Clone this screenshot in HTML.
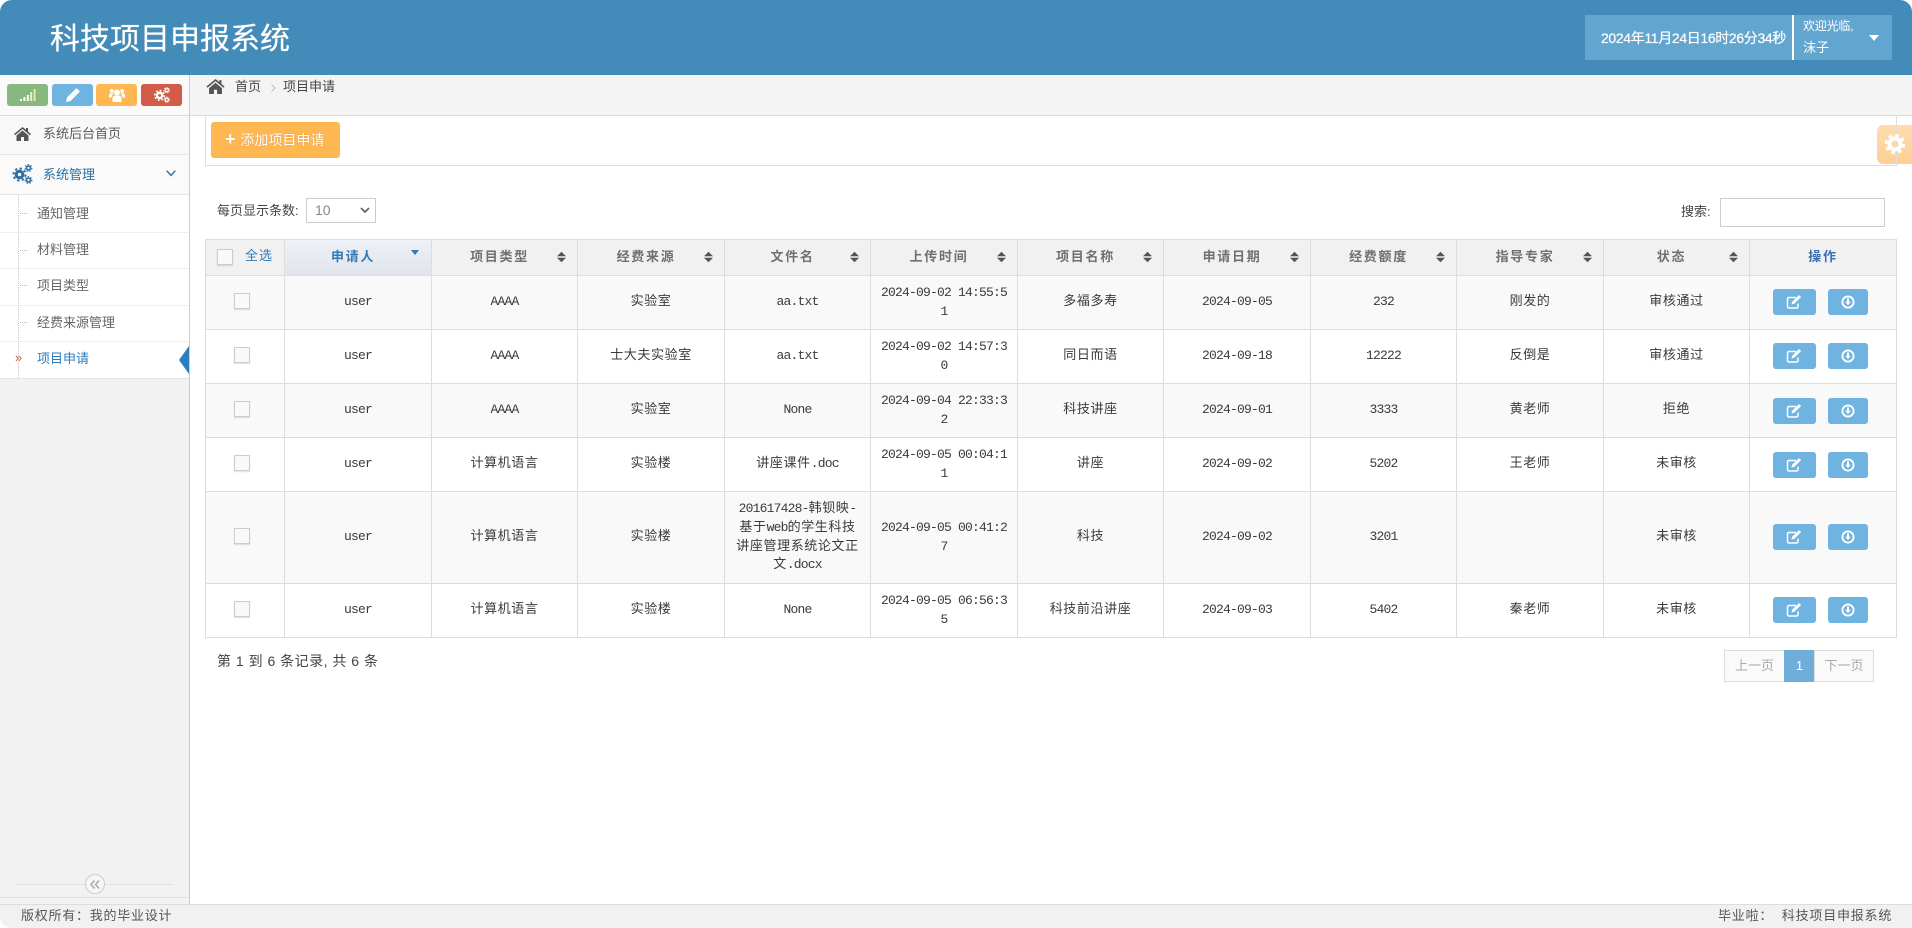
<!DOCTYPE html>
<html lang="zh-CN"><head><meta charset="utf-8"><title>科技项目申报系统</title>
<style>
*{box-sizing:border-box}
html,body{margin:0;padding:0;width:1912px;height:928px;overflow:hidden;background:#fff}
body{position:relative;font-family:"Liberation Sans","Noto Sans CJK SC",sans-serif;font-size:13px;color:#444}
.a{position:absolute;white-space:nowrap}
svg{display:block}
#hd{left:0;top:0;width:1912px;height:75px;background:#438bb8;border-radius:12px 12px 0 0}
#ft{left:0;top:904px;width:1912px;height:24px;background:#f1f1f1;border-top:1px solid #ddd;border-radius:0 0 0 12px}
#side{left:0;top:75px;width:190px;height:829px;background:#f2f2f2;border-right:1px solid #ccc}
.sb{height:22px;width:41px;top:84px;border-radius:3px}
.menu{left:0;width:189px;border-bottom:1px solid #e5e5e5}
.sub{left:0;width:189px;background:#fff;border-bottom:1px dotted #e2e2e2}
.subt{left:37px;color:#666;line-height:20px}
table{position:absolute;left:205px;top:239px;border-collapse:separate;border-spacing:0;table-layout:fixed;width:1692px;border-left:1px solid #ddd;border-top:1px solid #ddd;font-family:"Liberation Mono","Noto Sans CJK SC",monospace}
td,th{border-right:1px solid #ddd;border-bottom:1px solid #ddd;padding:0 8px;text-align:center;vertical-align:middle;font-size:13px;line-height:18.6px;font-weight:400;color:#3a3a3a;position:relative;letter-spacing:.6px}
.m{letter-spacing:-.8px}
th{height:36px;background:#f1f1f1;color:#707070;font-weight:700;letter-spacing:1.7px;padding:0 18px 1px 8px;font-family:"Liberation Sans","Noto Sans CJK SC",sans-serif}
th.act{background:linear-gradient(#eef1f7,#e0e4ec);color:#337ab7}
tr.o td{background:#f9f9f9}
tr.r td{height:54px}
.sort{position:absolute;right:11px;top:11px}
.cb{width:16px;height:16px;background:#f9f9f9;border:1px solid #ccc;box-shadow:0 1px 1px rgba(0,0,0,.12);margin:-3px auto 0;position:relative;left:-11px}
td.op{vertical-align:top;padding:13px 0 0 0}
.ops{position:relative;height:26px}
.b{position:absolute;top:0;height:26px;background:#6fb3e0;border-radius:3px}
.b svg{position:absolute}
.pg{top:650px;height:32px;line-height:30px;text-align:center;color:#aaa;background:#fafafa;border:1px solid #ddd}
</style></head><body>
<div class="a" id="hd"></div>
<div class="a" style="left:50px;top:18px;font-size:30px;line-height:44px;color:#fff;text-shadow:0 0 .6px #fff">科技项目申报系统</div>
<div class="a" style="left:1585px;top:15px;width:307px;height:45px;background:#62a6d0"></div>
<div class="a" style="left:1792px;top:15px;width:1.5px;height:45px;background:#fff"></div>
<div class="a" style="left:1601px;top:27px;font-size:14px;line-height:22px;color:#fff;letter-spacing:-.35px;text-shadow:0 0 .6px #fff">2024年11月24日16时26分34秒</div>
<div class="a" style="left:1803px;top:16px;font-size:12px;line-height:20px;color:#fff;letter-spacing:-.2px">欢迎光临,</div>
<div class="a" style="left:1803px;top:38px;font-size:13px;line-height:20px;color:#fff">沫子</div>
<svg class="a" style="left:1869px;top:35px" width="10" height="6"><path d="M0 0h10L5 6z" fill="#fff"/></svg>

<div class="a" id="side"></div>
<div class="a" style="left:0;top:75px;width:189px;height:41px;background:#fafafa;border-bottom:1px solid #ddd"></div>
<div class="a sb" style="left:7px;background:#87b87f"><svg style="margin:5px 0 0 13px" width="16" height="12" viewBox="0 0 16 12"><path d="M0 10h2v2H0zM3.400 8h2v4h-2zM6.800 6h2v6h-2z" fill="#fff"/><path d="M10.200 3h2v9h-2z" fill="#f2f0c0"/><path d="M13.600 0h2v12h-2z" fill="#e6e8a0"/></svg></div>
<div class="a sb" style="left:52px;background:#6fb3e0"><svg style="margin:4px 0 0 14px" width="14" height="14" viewBox="0 0 14 14"><path d="M0 14l1-4.500L9.800.7a1 1 0 0 1 1.400 0l2.100 2.100a1 1 0 0 1 0 1.400L4.500 13z" fill="#fff"/></svg></div>
<div class="a sb" style="left:96px;background:#ffb752"><svg style="margin:4px 0 0 13px" width="16" height="15" viewBox="0 0 16 15" fill="#fff"><circle cx="8" cy="4.500" r="3"/><circle cx="2.800" cy="3" r="2"/><circle cx="13.200" cy="3" r="2"/><path d="M3.500 14V10a3 3 0 0 1 3-2.500h3A3 3 0 0 1 12.500 10v4zM0 9.500V7a1.500 1.500 0 0 1 1.500-1.500H4.500L3 7.500 2.500 9.500zM16 9.500V7A1.500 1.500 0 0 0 14.500 5.500H11.500L13 7.500l.5 2z"/></svg></div>
<div class="a sb" style="left:141px;background:#d15b47"><svg style="margin:3px 0 0 13px" width="16" height="16" viewBox="0 0 20 20" fill="none" stroke="#fff"><circle cx="7" cy="10.500" r="3.300" stroke-width="3"/><circle cx="7" cy="10.500" r="6" stroke-width="2" stroke-dasharray="2.300 2.400"/><circle cx="16" cy="4" r="2" stroke-width="1.600"/><circle cx="16" cy="16" r="2" stroke-width="1.600"/><circle cx="16" cy="4" r="3.400" stroke-width="1.100" stroke-dasharray="1.500 1.500"/><circle cx="16" cy="16" r="3.400" stroke-width="1.100" stroke-dasharray="1.500 1.500"/></svg></div>

<div class="a menu" style="top:116px;height:39px;background:#f8f8f8"></div>
<svg class="a" style="left:14px;top:127px" width="17" height="14" viewBox="0 0 17 14"><path d="M8.500 0L0 7l1 1.200L8.500 2l7.500 6.200L17 7l-3-2.500V1h-2v1.800zM2.500 8.500V14h4.500v-4h3v4h4.500V8.500L8.500 3.500z" fill="#555"/></svg>
<div class="a" style="left:43px;top:124px;line-height:20px;color:#585858">系统后台首页</div>
<div class="a menu" style="top:155px;height:40px;background:#fafafa"></div>
<svg class="a" style="left:12px;top:164px" width="21" height="20" viewBox="0 0 20 20" fill="none" stroke="#2b6ea0"><circle cx="7" cy="10.500" r="3.300" stroke-width="3"/><circle cx="7" cy="10.500" r="6" stroke-width="2" stroke-dasharray="2.300 2.400"/><circle cx="16" cy="4" r="2" stroke-width="1.600"/><circle cx="16" cy="16" r="2" stroke-width="1.600"/><circle cx="16" cy="4" r="3.400" stroke-width="1.100" stroke-dasharray="1.500 1.500"/><circle cx="16" cy="16" r="3.400" stroke-width="1.100" stroke-dasharray="1.500 1.500"/></svg>
<div class="a" style="left:43px;top:165px;line-height:20px;color:#2b6ea0">系统管理</div>
<svg class="a" style="left:166px;top:170px" width="10" height="7"><path d="M.7.700L5 5.500 9.300.7" fill="none" stroke="#2b6ea0" stroke-width="1.400"/></svg>

<div class="a sub" style="top:195px;height:38px"></div>
<div class="a sub" style="top:233px;height:36px"></div>
<div class="a sub" style="top:269px;height:37px"></div>
<div class="a sub" style="top:306px;height:36px"></div>
<div class="a" style="left:0;top:342px;width:189px;height:37px;background:#fff;border-bottom:1px solid #e5e5e5"></div>
<div class="a" style="left:18px;top:195px;height:183px;border-left:1px dotted #b8cad8"></div>
<div class="a" style="left:20px;top:213px;width:7px;border-top:1px dotted #b4bec8"></div>
<div class="a" style="left:20px;top:250px;width:7px;border-top:1px dotted #b4bec8"></div>
<div class="a" style="left:20px;top:285px;width:7px;border-top:1px dotted #b4bec8"></div>
<div class="a" style="left:20px;top:322px;width:7px;border-top:1px dotted #b4bec8"></div>
<div class="a subt" style="top:204px">通知管理</div>
<div class="a subt" style="top:240px">材料管理</div>
<div class="a subt" style="top:276px">项目类型</div>
<div class="a subt" style="top:313px">经费来源管理</div>
<div class="a subt" style="top:349px;color:#2b7dbc">项目申请</div>
<div class="a" style="left:15px;top:349px;line-height:18px;font-size:13px;color:#c8604a">»</div>
<svg class="a" style="left:179px;top:346px" width="10" height="28"><path d="M10 0L0 14l10 14z" fill="#2b7dbc"/></svg>

<div class="a" style="left:15px;top:884px;width:159px;height:1px;background:#e0e0e0"></div>
<div class="a" style="left:85px;top:874px;width:20px;height:20px;border-radius:50%;background:#f6f6f6;border:1px solid #ccc"></div>
<svg class="a" style="left:90px;top:880px" width="10" height="9" viewBox="0 0 10 9"><path d="M4.500.5L1 4.500l3.500 4M9 .5L5.500 4.500l3.500 4" fill="none" stroke="#aaa" stroke-width="1.500"/></svg>
<div class="a" style="left:0;top:897px;width:189px;height:1px;background:#e0e0e0"></div>

<div class="a" style="left:190px;top:75px;width:1722px;height:41px;background:#f4f4f4;border-bottom:1px solid #ddd"></div>
<svg class="a" style="left:206px;top:79px" width="19" height="15" viewBox="0 0 17 14"><path d="M8.500 0L0 7l1 1.200L8.500 2l7.500 6.200L17 7l-3-2.500V1h-2v1.800zM2.500 8.500V14h4.500v-4h3v4h4.500V8.500L8.500 3.500z" fill="#555"/></svg>
<div class="a" style="left:235px;top:77px;line-height:20px;color:#444">首页</div>
<svg class="a" style="left:271px;top:84px" width="5" height="8"><path d="M.5.500L4 4 .5 7.500" fill="none" stroke="#bbb"/></svg>
<div class="a" style="left:283px;top:77px;line-height:20px;color:#444">项目申请</div>

<div class="a" style="left:205px;top:116px;width:1692px;height:50px;border:1px solid #ddd;border-top:0"></div>
<div class="a" style="left:211px;top:122px;width:129px;height:36px;background:#ffb752;border-radius:3px;color:#fff;font-size:14px;line-height:36px;padding-left:14px;text-shadow:0 0 1px rgba(180,110,20,.6)"><span style="font-weight:700;font-size:18px;line-height:30px;margin-right:1px">+</span> 添加项目申请</div>
<div class="a" style="left:1877px;top:125px;width:35px;height:39px;border-radius:6px 0 0 6px;background:linear-gradient(#fedcb0,#fecf92)"></div>
<div class="a" style="left:1896px;top:116px;height:50px;width:1px;background:#ddd"></div>
<svg class="a" style="left:1884px;top:133px" width="22" height="22" viewBox="0 0 22 22" fill="none" stroke="#fff"><circle cx="11" cy="11" r="5.500" stroke-width="4"/><circle cx="11" cy="11" r="8.500" stroke-width="3.500" stroke-dasharray="3.500 3.170"/></svg>

<div class="a" style="left:217px;top:201px;line-height:20px;color:#444">每页显示条数:</div>
<div class="a" style="left:306px;top:198px;width:70px;height:25px;border:1px solid #ccc;background:#fff;color:#888;font-size:14px;line-height:23px;padding-left:8px">10<svg style="position:absolute;right:5px;top:8px" width="10" height="7"><path d="M1 1l4 4 4-4" fill="none" stroke="#666" stroke-width="1.800"/></svg></div>
<div class="a" style="left:1681px;top:202px;line-height:20px;color:#444">搜索:</div>
<div class="a" style="left:1720px;top:198px;width:165px;height:29px;border:1px solid #ccc;background:#fff"></div>

<table>
<colgroup><col style="width:79px"><col style="width:147px"><col style="width:146px"><col style="width:147px"><col style="width:146px"><col style="width:147px"><col style="width:146px"><col style="width:147px"><col style="width:146px"><col style="width:147px"><col style="width:146px"><col style="width:147px"></colgroup>
<tr>
<th style="padding:0;font-weight:400;letter-spacing:.5px;color:#337ab7"><div class="a" style="left:11px;top:9px;width:16px;height:16px;border:1px solid #ccc;background:#f9f9f9;box-shadow:0 1px 1px rgba(0,0,0,.12)"></div><div class="a" style="left:39px;top:7px;letter-spacing:1px">全选</div></th>
<th class="act">申请人<svg class="sort" style="right:12px;top:10px" width="8" height="5"><path d="M0 0h8L4 5z" fill="#337ab7"/></svg></th>
<th>项目类型<svg class="sort" width="9" height="12"><path d="M0 5.300L4.500.8 9 5.300zM0 6.700l4.500 4.500L9 6.700z" fill="#555"/></svg></th>
<th>经费来源<svg class="sort" width="9" height="12"><path d="M0 5.300L4.500.8 9 5.300zM0 6.700l4.500 4.500L9 6.700z" fill="#555"/></svg></th>
<th>文件名<svg class="sort" width="9" height="12"><path d="M0 5.300L4.500.8 9 5.300zM0 6.700l4.500 4.500L9 6.700z" fill="#555"/></svg></th>
<th>上传时间<svg class="sort" width="9" height="12"><path d="M0 5.300L4.500.8 9 5.300zM0 6.700l4.500 4.500L9 6.700z" fill="#555"/></svg></th>
<th>项目名称<svg class="sort" width="9" height="12"><path d="M0 5.300L4.500.8 9 5.300zM0 6.700l4.500 4.500L9 6.700z" fill="#555"/></svg></th>
<th>申请日期<svg class="sort" width="9" height="12"><path d="M0 5.300L4.500.8 9 5.300zM0 6.700l4.500 4.500L9 6.700z" fill="#555"/></svg></th>
<th>经费额度<svg class="sort" width="9" height="12"><path d="M0 5.300L4.500.8 9 5.300zM0 6.700l4.500 4.500L9 6.700z" fill="#555"/></svg></th>
<th>指导专家<svg class="sort" width="9" height="12"><path d="M0 5.300L4.500.8 9 5.300zM0 6.700l4.500 4.500L9 6.700z" fill="#555"/></svg></th>
<th>状态<svg class="sort" width="9" height="12"><path d="M0 5.300L4.500.8 9 5.300zM0 6.700l4.500 4.500L9 6.700z" fill="#555"/></svg></th>
<th style="padding:0 0 1px;color:#3a6fb0">操作</th>
</tr>
<tr class="r o"><td style="padding:0 0 0 16px"><div class="cb"></div></td><td><span class="m">user</span></td><td><span class="m">AAAA</span></td><td>实验室</td><td><span class="m">aa.txt</span></td><td><span class="m">2024-09-02 14:55:5<br>1</span></td><td>多福多寿</td><td><span class="m">2024-09-05</span></td><td><span class="m">232</span></td><td>刚发的</td><td>审核通过</td><td class="op"><div class="ops"><div class="b" style="left:23px;width:43px"><svg style="left:13px;top:6px" width="16" height="14" viewBox="0 0 16 14"><path d="M10 2.500H3A1.500 1.500 0 0 0 1.500 4v7.500A1.500 1.500 0 0 0 3 13h7.500A1.500 1.500 0 0 0 12 11.500V8.500" fill="none" stroke="#fff" stroke-width="1.500"/><path d="M5.500 9.500l.6-2.600L12.500.5a.8.8 0 0 1 1.100 0l1 1a.8.8 0 0 1 0 1.100L8.100 8.900z" fill="#fff"/></svg></div><div class="b" style="left:78px;width:40px"><svg style="left:13px;top:6px" width="14" height="14" viewBox="0 0 14 14"><circle cx="7" cy="7" r="5.600" fill="none" stroke="#fff" stroke-width="1.900"/><path d="M6 3.500h2v3.300h1.800L7 10.200 4.200 6.800H6z" fill="#fff"/></svg></div></div></td></tr>
<tr class="r"><td style="padding:0 0 0 16px"><div class="cb"></div></td><td><span class="m">user</span></td><td><span class="m">AAAA</span></td><td>士大夫实验室</td><td><span class="m">aa.txt</span></td><td><span class="m">2024-09-02 14:57:3<br>0</span></td><td>同日而语</td><td><span class="m">2024-09-18</span></td><td><span class="m">12222</span></td><td>反倒是</td><td>审核通过</td><td class="op"><div class="ops"><div class="b" style="left:23px;width:43px"><svg style="left:13px;top:6px" width="16" height="14" viewBox="0 0 16 14"><path d="M10 2.500H3A1.500 1.500 0 0 0 1.500 4v7.500A1.500 1.500 0 0 0 3 13h7.500A1.500 1.500 0 0 0 12 11.500V8.500" fill="none" stroke="#fff" stroke-width="1.500"/><path d="M5.500 9.500l.6-2.600L12.500.5a.8.8 0 0 1 1.100 0l1 1a.8.8 0 0 1 0 1.100L8.100 8.900z" fill="#fff"/></svg></div><div class="b" style="left:78px;width:40px"><svg style="left:13px;top:6px" width="14" height="14" viewBox="0 0 14 14"><circle cx="7" cy="7" r="5.600" fill="none" stroke="#fff" stroke-width="1.900"/><path d="M6 3.500h2v3.300h1.800L7 10.200 4.200 6.800H6z" fill="#fff"/></svg></div></div></td></tr>
<tr class="r o"><td style="padding:0 0 0 16px"><div class="cb"></div></td><td><span class="m">user</span></td><td><span class="m">AAAA</span></td><td>实验室</td><td><span class="m">None</span></td><td><span class="m">2024-09-04 22:33:3<br>2</span></td><td>科技讲座</td><td><span class="m">2024-09-01</span></td><td><span class="m">3333</span></td><td>黄老师</td><td>拒绝</td><td class="op" style="padding-top:14px"><div class="ops"><div class="b" style="left:23px;width:43px"><svg style="left:13px;top:6px" width="16" height="14" viewBox="0 0 16 14"><path d="M10 2.500H3A1.500 1.500 0 0 0 1.500 4v7.500A1.500 1.500 0 0 0 3 13h7.500A1.500 1.500 0 0 0 12 11.500V8.500" fill="none" stroke="#fff" stroke-width="1.500"/><path d="M5.500 9.500l.6-2.600L12.500.5a.8.8 0 0 1 1.100 0l1 1a.8.8 0 0 1 0 1.100L8.100 8.900z" fill="#fff"/></svg></div><div class="b" style="left:78px;width:40px"><svg style="left:13px;top:6px" width="14" height="14" viewBox="0 0 14 14"><circle cx="7" cy="7" r="5.600" fill="none" stroke="#fff" stroke-width="1.900"/><path d="M6 3.500h2v3.300h1.800L7 10.200 4.200 6.800H6z" fill="#fff"/></svg></div></div></td></tr>
<tr class="r"><td style="padding:0 0 0 16px"><div class="cb"></div></td><td><span class="m">user</span></td><td>计算机语言</td><td>实验楼</td><td>讲座课件<span class="m">.doc</span></td><td><span class="m">2024-09-05 00:04:1<br>1</span></td><td>讲座</td><td><span class="m">2024-09-02</span></td><td><span class="m">5202</span></td><td>王老师</td><td>未审核</td><td class="op" style="padding-top:14px"><div class="ops"><div class="b" style="left:23px;width:43px"><svg style="left:13px;top:6px" width="16" height="14" viewBox="0 0 16 14"><path d="M10 2.500H3A1.500 1.500 0 0 0 1.500 4v7.500A1.500 1.500 0 0 0 3 13h7.500A1.500 1.500 0 0 0 12 11.500V8.500" fill="none" stroke="#fff" stroke-width="1.500"/><path d="M5.500 9.500l.6-2.600L12.500.5a.8.8 0 0 1 1.100 0l1 1a.8.8 0 0 1 0 1.100L8.100 8.900z" fill="#fff"/></svg></div><div class="b" style="left:78px;width:40px"><svg style="left:13px;top:6px" width="14" height="14" viewBox="0 0 14 14"><circle cx="7" cy="7" r="5.600" fill="none" stroke="#fff" stroke-width="1.900"/><path d="M6 3.500h2v3.300h1.800L7 10.200 4.200 6.800H6z" fill="#fff"/></svg></div></div></td></tr>
<tr class="o"><td style="height:92px;padding:0 0 0 16px"><div class="cb"></div></td><td><span class="m">user</span></td><td>计算机语言</td><td>实验楼</td><td><span class="m">201617428-</span>韩钡映<span class="m">-</span><br>基于<span class="m">web</span>的学生科技<br>讲座管理系统论文正<br>文<span class="m">.docx</span></td><td><span class="m">2024-09-05 00:41:2<br>7</span></td><td>科技</td><td><span class="m">2024-09-02</span></td><td><span class="m">3201</span></td><td></td><td>未审核</td><td class="op" style="padding-top:32px"><div class="ops"><div class="b" style="left:23px;width:43px"><svg style="left:13px;top:6px" width="16" height="14" viewBox="0 0 16 14"><path d="M10 2.500H3A1.500 1.500 0 0 0 1.500 4v7.500A1.500 1.500 0 0 0 3 13h7.500A1.500 1.500 0 0 0 12 11.500V8.500" fill="none" stroke="#fff" stroke-width="1.500"/><path d="M5.500 9.500l.6-2.600L12.500.5a.8.8 0 0 1 1.100 0l1 1a.8.8 0 0 1 0 1.100L8.100 8.900z" fill="#fff"/></svg></div><div class="b" style="left:78px;width:40px"><svg style="left:13px;top:6px" width="14" height="14" viewBox="0 0 14 14"><circle cx="7" cy="7" r="5.600" fill="none" stroke="#fff" stroke-width="1.900"/><path d="M6 3.500h2v3.300h1.800L7 10.200 4.200 6.800H6z" fill="#fff"/></svg></div></div></td></tr>
<tr class="r"><td style="padding:0 0 0 16px"><div class="cb"></div></td><td><span class="m">user</span></td><td>计算机语言</td><td>实验楼</td><td><span class="m">None</span></td><td><span class="m">2024-09-05 06:56:3<br>5</span></td><td>科技前沿讲座</td><td><span class="m">2024-09-03</span></td><td><span class="m">5402</span></td><td>秦老师</td><td>未审核</td><td class="op"><div class="ops"><div class="b" style="left:23px;width:43px"><svg style="left:13px;top:6px" width="16" height="14" viewBox="0 0 16 14"><path d="M10 2.500H3A1.500 1.500 0 0 0 1.500 4v7.500A1.500 1.500 0 0 0 3 13h7.500A1.500 1.500 0 0 0 12 11.500V8.500" fill="none" stroke="#fff" stroke-width="1.500"/><path d="M5.500 9.500l.6-2.600L12.500.5a.8.8 0 0 1 1.100 0l1 1a.8.8 0 0 1 0 1.100L8.100 8.900z" fill="#fff"/></svg></div><div class="b" style="left:78px;width:40px"><svg style="left:13px;top:6px" width="14" height="14" viewBox="0 0 14 14"><circle cx="7" cy="7" r="5.600" fill="none" stroke="#fff" stroke-width="1.900"/><path d="M6 3.500h2v3.300h1.800L7 10.200 4.200 6.800H6z" fill="#fff"/></svg></div></div></td></tr>
</table>

<div class="a" style="left:217px;top:651px;line-height:20px;font-size:14px;letter-spacing:.5px;color:#444">第 1 到 6 条记录, 共 6 条</div>
<div class="a pg" style="left:1724px;width:61px">上一页</div>
<div class="a pg" style="left:1784px;width:31px;background:#6faed9;border-color:#6faed9;color:#fff">1</div>
<div class="a pg" style="left:1814px;width:60px">下一页</div>

<div class="a" id="ft"></div>
<div class="a" style="left:21px;top:907px;line-height:20px;font-family:'Liberation Mono','Noto Sans CJK SC',monospace;letter-spacing:.75px;color:#555">版权所有：我的毕业设计</div>
<div class="a" style="left:1718px;top:907px;line-height:20px;font-family:'Liberation Mono','Noto Sans CJK SC',monospace;letter-spacing:.8px;color:#555">毕业啦： 科技项目申报系统</div>
</body></html>
